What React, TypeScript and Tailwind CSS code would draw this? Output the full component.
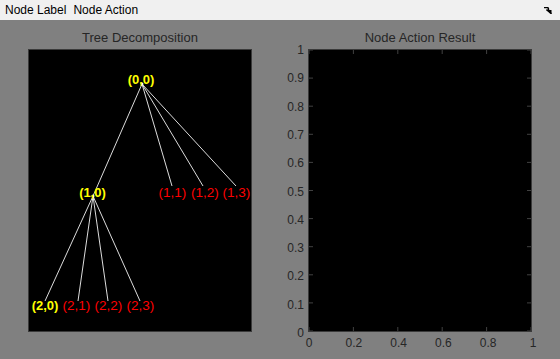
// App.tsx
// MATLAB-style wavelet packet tree viewer: menu bar, tree plot and empty result axes.

const FONT = { fontFamily: '"Liberation Sans", Arial, sans-serif' };

type TreeNode = {
  label: string;
  x: number;
  y: number;
  color: "yellow" | "red";
};

// node text positions (relative to the left axes box)
const NODES: TreeNode[] = [
  { label: "(0,0)", x: 112, y: 29, color: "yellow" },
  { label: "(1,0)", x: 63.5, y: 142, color: "yellow" },
  { label: "(1,1)", x: 143.5, y: 142, color: "red" },
  { label: "(1,2)", x: 176, y: 142, color: "red" },
  { label: "(1,3)", x: 207.5, y: 142, color: "red" },
  { label: "(2,0)", x: 16, y: 255, color: "yellow" },
  { label: "(2,1)", x: 47.5, y: 255, color: "red" },
  { label: "(2,2)", x: 79.5, y: 255, color: "red" },
  { label: "(2,3)", x: 111.5, y: 255, color: "red" },
];

// edges: [x1, y1, x2, y2]
const EDGES: [number, number, number, number][] = [
  [113, 34, 64, 146],
  [113, 34, 143, 136],
  [113, 34, 174, 136],
  [113, 34, 207, 136],
  [64, 146, 16, 251],
  [64, 146, 49, 251],
  [64, 146, 79, 251],
  [64, 146, 111, 251],
];

const AX_W = 224;
const AX_H = 283;
const Y_TICKS = [0, 0.1, 0.2, 0.3, 0.4, 0.5, 0.6, 0.7, 0.8, 0.9, 1];
const X_TICKS = [0, 0.2, 0.4, 0.6, 0.8, 1];

function DockIcon() {
  return (
    <svg width="8" height="7" viewBox="0 0 8 7">
      <path d="M0 0.5 H3 Q4.5 0.5 4.5 2 V3" stroke="#000" strokeWidth="1.4" fill="none" />
      <path d="M2 3 L7.5 3 L7.5 6.8 Z" fill="#000" />
      <path d="M2.5 2.5 L7.5 6.8" stroke="#000" strokeWidth="1.6" />
    </svg>
  );
}

function MenuBar() {
  return (
    <div className="h-[20px] bg-[#f0f0f0] flex items-center justify-between pl-[5px] pr-[8px]">
      <div className="flex gap-[7px] text-[12px] text-black" style={FONT}>
        <span>Node Label</span>
        <span>Node Action</span>
      </div>
      <DockIcon />
    </div>
  );
}

function TreePanel() {
  return (
    <div className="flex flex-col items-center">
      <div className="h-[16px] leading-[16px] text-[13px] text-[#262626] mb-[3px]" style={FONT}>
        Tree Decomposition
      </div>
      <div className="w-[224px] h-[283px] bg-black border border-[#3a3a3a]">
        <svg width={AX_W - 2} height={AX_H - 2} className="block">
          {EDGES.map(([x1, y1, x2, y2], i) => (
            <line key={i} x1={x1} y1={y1} x2={x2} y2={y2} stroke="#dcdcdc" strokeWidth="1" />
          ))}
          <circle cx={113} cy={34} r={1.5} fill="#fff" />
          <circle cx={64} cy={146} r={1.5} fill="#fff" />
          {NODES.map((n) => (
            <text
              key={n.label}
              x={n.x}
              y={n.y}
              textAnchor="middle"
              dominantBaseline="central"
              fontSize={n.color === "yellow" ? 13 : 13.5}
              fontWeight={n.color === "yellow" ? 700 : 400}
              fill={n.color === "yellow" ? "#ffff00" : "#ff0000"}
              style={FONT}
            >
              {n.label}
            </text>
          ))}
        </svg>
      </div>
    </div>
  );
}

function ResultPanel() {
  const iw = AX_W - 2;
  const ih = AX_H - 2;
  return (
    <div className="flex flex-col items-center">
      <div className="h-[16px] leading-[16px] text-[13px] text-[#262626] mb-[3px]" style={FONT}>
        Node Action Result
      </div>
      <div className="relative w-[224px] h-[283px] bg-black border border-[#3a3a3a]">
        <svg width={iw} height={ih} className="block">
          {Y_TICKS.map((t) => {
            const y = ih - t * ih;
            return (
              <g key={"y" + t}>
                <line x1={0} y1={y} x2={4} y2={y} stroke="#404040" />
                <line x1={iw - 4} y1={y} x2={iw} y2={y} stroke="#404040" />
              </g>
            );
          })}
          {X_TICKS.map((t) => {
            const x = t * iw;
            return (
              <g key={"x" + t}>
                <line x1={x} y1={0} x2={x} y2={4} stroke="#404040" />
                <line x1={x} y1={ih - 4} x2={x} y2={ih} stroke="#404040" />
              </g>
            );
          })}
        </svg>
        {Y_TICKS.map((t) => (
          <span
            key={"yl" + t}
            className="absolute right-full mr-[5px] -translate-y-1/2 text-[12px] leading-[14px] text-[#262626]"
            style={{ ...FONT, top: `${(1 - t) * AX_H}px` }}
          >
            {t}
          </span>
        ))}
        {X_TICKS.map((t) => (
          <span
            key={"xl" + t}
            className="absolute top-full mt-[5px] -translate-x-1/2 text-[12px] leading-[14px] text-[#262626]"
            style={{ ...FONT, left: `${t * AX_W}px` }}
          >
            {t}
          </span>
        ))}
      </div>
    </div>
  );
}

export default function App() {
  return (
    <div className="w-[560px] h-[359px] bg-[#808080] overflow-hidden">
      <MenuBar />
      <div className="flex pl-[28px] pt-[10px] gap-[56px]">
        <TreePanel />
        <ResultPanel />
      </div>
    </div>
  );
}
